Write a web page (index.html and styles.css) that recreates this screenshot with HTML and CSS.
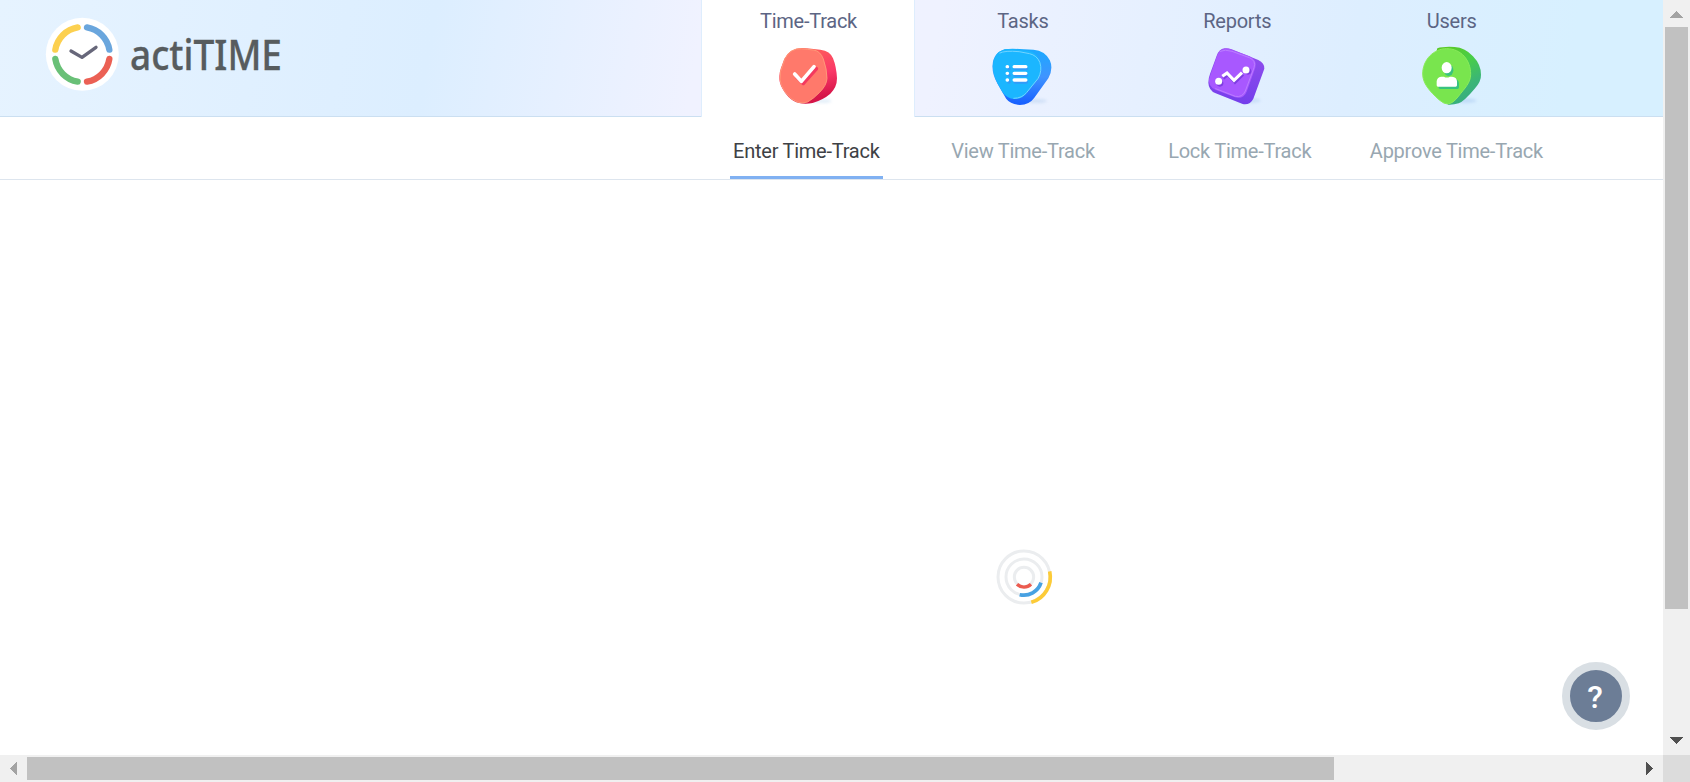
FILE: index.html
```html
<!DOCTYPE html>
<html lang="en">
<head>
<meta charset="utf-8">
<title>actiTIME - Enter Time-Track</title>
<link rel="stylesheet" href="styles.css">
</head>
<body>
<div class="window">
  <div class="page">
    <header class="header">
      <svg class="logo" width="270" height="116" viewBox="0 0 810 348" aria-label="actiTIME">
        <circle cx="157" cy="163" r="109.500" fill="#fff"/>
        <g fill="none" stroke-width="19" stroke-linecap="round">
          <path stroke="#fcd04f" d="M76 149A82 82 0 0 1 143 82"/>
          <path stroke="#6aa6dd" d="M171 82A82 82 0 0 1 238 149"/>
          <path stroke="#eb6054" d="M238 177A82 82 0 0 1 171 245"/>
          <path stroke="#69c077" d="M143 245A82 82 0 0 1 76 177"/>
          <path stroke="#67677a" stroke-width="10" stroke-linejoin="round" d="M123 153L156 172L198 142"/>
        </g>
        <text class="logo-text" x="300" y="209" textLength="456" lengthAdjust="spacingAndGlyphs">actiTIME</text>
      </svg>
      <nav class="tabs">
        <a class="tab tab-active"><span>Time-Track</span>
          <svg class="tab-icon" viewBox="-6 0 300 240">
            <defs>
              <linearGradient id="red" x1="0" y1="0" x2=".25" y2="1"><stop offset="0" stop-color="#ff6a55"/><stop offset=".6" stop-color="#fa3868"/><stop offset="1" stop-color="#d51548"/></linearGradient>
              <filter id="soft" x="-30%" y="-80%" width="160%" height="260%"><feGaussianBlur stdDeviation="5"/></filter>
            </defs>
            <ellipse cx="185" cy="198" rx="30" ry="6" fill="#c9dff3" opacity=".5" filter="url(#soft)"/>
            <path fill="url(#red)" d="M108 41Q123 37 141 40L181 44Q211 48 219 70Q229 94 231 130Q231 157 211 176Q190 194 158 204Q137 209 117 204Q93 198 75 173Q59 151 58 133Q57 111 67 88Q77 50 108 41Z"/>
            <path fill="#ff796b" stroke="#ffa17c" stroke-width="2.500" d="M110 42Q123 40 142 43L161 45Q181 48 190 72Q201 103 201 130Q200 151 179 172Q162 190 143 201Q127 207 111 201Q91 194 75 171Q60 149 60 133Q58 111 69 88Q79 49 110 42Z"/>
            <path fill="none" stroke="#f4395f" stroke-width="11" stroke-linecap="round" stroke-linejoin="round" d="M110 125L130 145L169 101"/>
            <path fill="none" stroke="#fff" stroke-width="11" stroke-linecap="round" stroke-linejoin="round" d="M104 117L124 139L162 95"/>
          </svg>
        </a>
        <a class="tab"><span>Tasks</span>
          <svg class="tab-icon" viewBox="-7.500 0 300 240">
            <defs><linearGradient id="blue" x1="0" y1="0" x2="0" y2="1"><stop offset="0" stop-color="#1aaaff"/><stop offset=".5" stop-color="#4094ff"/><stop offset="1" stop-color="#165eff"/></linearGradient></defs>
            <ellipse cx="187" cy="198" rx="30" ry="6" fill="#b5cfee" opacity=".5" filter="url(#soft)"/>
            <path fill="url(#blue)" d="M91 43Q107 40 134 42L177 44Q212 47 226 76Q237 101 222 129L179 189Q165 209 136 210Q108 208 95 191L69 146Q53 118 54 92Q56 53 91 43Z"/>
            <path fill="#1bb6ff" d="M91 43Q105 41 134 44L163 48Q188 53 198 82Q206 108 191 132L157 173Q143 194 117 192Q96 189 84 172L68 143Q55 118 55 93Q57 53 91 43Z"/>
            <path fill="none" stroke="#71d3ff" stroke-width="3" stroke-linecap="round" d="M76 54Q91 46 134 50L165 56Q187 61 196 82Q204 106 191 130L157 172Q143 190 118 190"/>
            <g fill="none" stroke-width="10" stroke-linecap="round">
              <path stroke="#329bf8" d="M103 101h1m18 0h34m-53 20h1m18 0h34m-53 20h1m18 0h34"/>
              <path stroke="#fff" d="M98 95h1m20 0h35m-56 20h1m20 0h35m-56 20h1m20 0h35"/>
            </g>
          </svg>
        </a>
        <a class="tab"><span>Reports</span>
          <svg class="tab-icon" viewBox="-9 0 300 240">
            <defs><linearGradient id="purple" x1="0" y1="0" x2="0" y2="1"><stop offset="0" stop-color="#9450ed"/><stop offset="1" stop-color="#743eeb"/></linearGradient></defs>
            <ellipse cx="176" cy="197" rx="36" ry="7" fill="#abc8ed" opacity=".45" filter="url(#soft)"/>
            <path fill="url(#purple)" d="M103 40Q112 38 125 43L205 75Q224 84 223 101L190 191Q180 211 158 207L77 175Q56 166 55 143Q55 130 60 117L80 62Q87 43 103 40Z"/>
            <path fill="#a858ff" d="M104 41Q113 39 125 44L179 64Q203 76 196 98L170 170Q161 193 135 187L76 164Q54 154 57 132L81 63Q88 44 104 41Z"/>
            <path fill="none" stroke="#bb7dff" stroke-width="3" stroke-linecap="round" d="M90 49Q105 42 126 49L178 68Q199 77 192 98L166 168Q157 188 136 184L77 161"/>
            <path fill="none" stroke="#7f3de2" stroke-width="9" d="M100 130L114 119L135 142L159 118"/>
            <g fill="#7f3de2"><circle cx="90" cy="145" r="10"/><circle cx="174" cy="109" r="10"/></g>
            <path fill="none" stroke="#fff" stroke-width="9.500" d="M97 124L111 114L132 136L156 113"/>
            <g fill="#fff"><circle cx="86" cy="139" r="10.500"/><circle cx="168" cy="105" r="10.500"/></g>
          </svg>
        </a>
        <a class="tab"><span>Users</span>
          <svg class="tab-icon" viewBox="3 0 300 240">
            <defs><linearGradient id="green" x1=".3" y1="0" x2=".8" y2="1"><stop offset="0" stop-color="#5bc928"/><stop offset=".35" stop-color="#48ce48"/><stop offset=".7" stop-color="#3bb577"/><stop offset="1" stop-color="#36a983"/></linearGradient></defs>
            <ellipse cx="197" cy="197" rx="32" ry="7" fill="#a8c8f0" opacity=".5" filter="url(#soft)"/>
            <path fill="url(#green)" d="M112 40Q129 34 164 36Q196 38 219 64Q243 89 243 119Q244 139 224 161Q193 198 176 205Q160 210 144 209L101 80Z"/>
            <path fill="#79e54e" stroke="#8bec5c" stroke-width="3" d="M140 41C183 41 212 75 212 118C212 143 194 160 176 183Q159 206 143 207Q132 207 118 195C88 168 68 145 68 117C68 74 101 41 140 41Z"/>
            <g fill="#38c37e"><ellipse cx="146" cy="106" rx="14" ry="17"/><path d="M116 160v-15q0-14 15-15q16 8 30 0q15 3 16 15v12q0 5-5 5h-52z"/></g>
            <g fill="#fff"><ellipse cx="140" cy="98" rx="15" ry="17"/><path d="M110 151v-12q1-12 13-14h9q8 5 18 0h6q14 1 15 14v12q0 4-4 4h-53q-4 0-4-4z"/></g>
          </svg>
        </a>
      </nav>
    </header>
    <nav class="subnav">
      <a class="sub"><span class="sub-active">Enter Time-Track</span></a>
      <a class="sub"><span>View Time-Track</span></a>
      <a class="sub"><span>Lock Time-Track</span></a>
      <a class="sub"><span>Approve Time-Track</span></a>
    </nav>
    <main class="content">
      <svg class="loader" width="60" height="60" viewBox="-90 -90 180 180" fill="none" stroke-width="9">
        <g stroke="#ebedef"><circle r="78"/><circle r="54"/><circle r="29"/></g>
        <path stroke="#fccb38" stroke-width="11" d="M77 -17A79 79 0 0 1 22 76"/>
        <path stroke="#47a1e2" stroke-width="11" d="M51 17A54 54 0 0 1 -13 53"/>
        <path stroke="#ec5b4f" stroke-width="10" d="M21 22A31 31 0 0 1 -21 22"/>
      </svg>
      <button class="help">?</button>
    </main>
  </div>
  <div class="vbar">
    <svg class="arrow" viewBox="0 0 27 27"><path fill="#a3a3a3" d="M7 18L13.500 11L20 18Z"/></svg>
    <div class="vthumb"></div>
    <svg class="arrow arrow-end" viewBox="0 0 27 27"><path fill="#505050" d="M7 9L13.500 16L20 9Z"/></svg>
  </div>
  <div class="hbar">
    <svg class="arrow" viewBox="0 0 27 27"><path fill="#a3a3a3" d="M17 7L10 13.500L17 20Z"/></svg>
    <div class="hthumb"></div>
    <svg class="arrow arrow-end" viewBox="0 0 27 27"><path fill="#505050" d="M10 7L17 13.500L10 20Z"/></svg>
  </div>
  <div class="corner"></div>
</div>
</body>
</html>
```

FILE: styles.css
```css
* { box-sizing: border-box; }
body { margin: 0; overflow: hidden; background: #fff; font-family: Roboto, sans-serif; }
.window { display: grid; grid-template: 755px 27px / 1663px 27px; width: 1690px; height: 782px; }
.page { display: flex; flex-direction: column; min-width: 0; }
.header {
  display: flex;
  height: 117px;
  flex: none;
  padding-left: 30px;
  background: linear-gradient(100deg, #e6f3ff 0%, #dceeff 26%, #f0f2ff 42%, #eff2ff 56%, #ddeeff 81%, #d7f0ff 94%, #d7f0ff 100%);
  box-shadow: inset 0 -1px #cbdff1;
}
.logo { flex: none; margin-right: 401px; overflow: visible; }
.logo-text { font: 500 124px "Noto Sans", sans-serif; fill: #575c5e; stroke: #575c5e; stroke-width: 1px; }
.tabs { display: flex; gap: 0.4px; }
.tab {
  display: flex;
  flex-direction: column;
  align-items: center;
  width: 214px;
  height: 117px;
  padding-top: 9px;
  color: #5c6584;
  font-size: 20px;
  line-height: 24px;
  letter-spacing: -0.25px;
}
.tab span { padding-left: 1px; }
.tab-active { background: #fff; border: solid #deedfd; border-width: 0 1px; }
.tab-icon { width: 100px; height: 80px; margin-top: 2px; flex: none; }
.subnav { display: flex; flex: none; height: 63px; padding-left: 698px; border-bottom: 1px solid #dde5ee; }
.sub { display: flex; justify-content: center; width: 216.7px; color: #98a7b1; font-size: 20px; line-height: 24px; letter-spacing: -0.25px; }
.sub span { height: 62px; padding: 22px 4px 0; white-space: nowrap; }
.sub .sub-active { width: 153px; padding: 22px 0 0; text-align: center; color: #3e4145; border-bottom: 3px solid #80b1f2; }
.content { display: flex; flex: 1; align-items: flex-start; padding-left: 994px; }
.loader { margin-top: 367px; }
.help {
  width: 68px;
  height: 68px;
  margin: 482px 0 0 508px;
  padding: 0 2px 0 0;
  border: 8px solid #d9dfe4;
  border-radius: 50%;
  background: #6c7d96;
  color: #fff;
  font: 500 32px/54px Roboto, sans-serif;
}
.vbar, .hbar { display: flex; background: #f0f0f0; }
.vbar { flex-direction: column; align-items: center; }
.hbar { align-items: center; }
.arrow { display: block; width: 27px; height: 27px; flex: none; shape-rendering: crispEdges; }
.vthumb { width: 23px; height: 582px; background: #c1c1c1; }
.hthumb { width: 1307px; height: 23px; background: #c1c1c1; }
.vbar .arrow-end { margin-top: auto; }
.hbar .arrow-end { margin-left: auto; }
.corner { background: #dcdcdc; }
```
